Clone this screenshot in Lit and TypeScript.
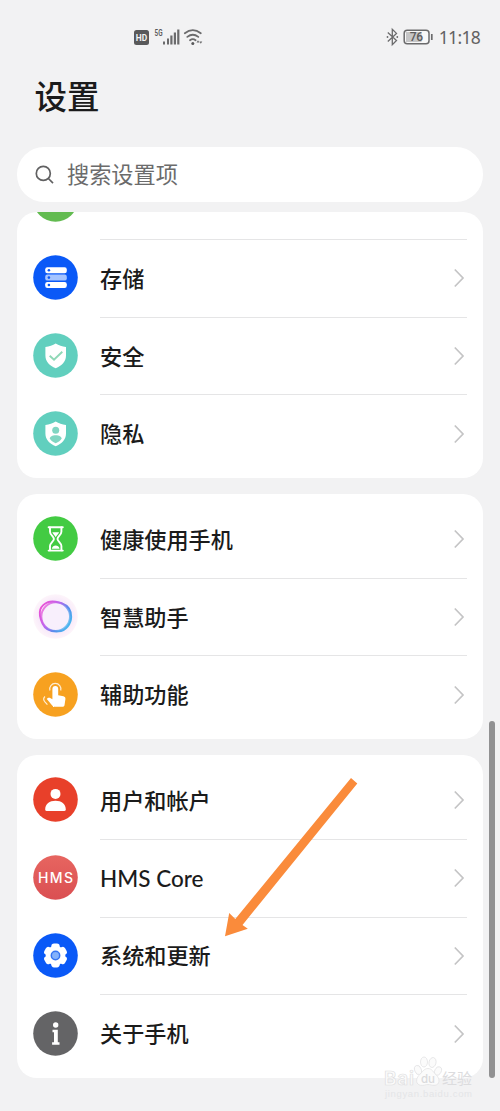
import { LitElement, html, svg, css, SVGTemplateResult } from "lit";
import { customElement, property } from "lit/decorators.js";

const GEAR_TEETH = [0, 60, 120, 180, 240, 300];

const icons: Record<string, SVGTemplateResult> = {
  storage: svg`
    <circle cx="22.5" cy="22.5" r="22.3" fill="#0a59f7"/>
    <rect x="12.2" y="12.2" width="21.6" height="6" rx="2.2" fill="#fff"/>
    <rect x="12.2" y="19.6" width="21.6" height="6" rx="2.2" fill="#a5c4ff"/>
    <rect x="12.2" y="27" width="21.6" height="6" rx="2.2" fill="#fff"/>
    <g fill="#0a59f7"><circle cx="15.9" cy="15.2" r="1.3"/><circle cx="15.9" cy="22.6" r="1.3"/><circle cx="15.9" cy="30" r="1.3"/></g>`,
  security: svg`
    <circle cx="22.5" cy="22.5" r="22.3" fill="#61cfbe"/>
    <path d="M22.7 10.4c3 2 6.400 3.100 10.300 3.600v8.500c0 6.100-4.200 10.200-10.300 12.700-6.100-2.500-10.300-6.600-10.300-12.700V14c3.900-.5 7.300-1.600 10.300-3.600z" fill="#fff"/>
    <path d="M16.700 22.800l4.300 4 8.300-8" fill="none" stroke="#8fd8b6" stroke-width="1.900"/>`,
  privacy: svg`
    <circle cx="22.5" cy="22.500" r="22.3" fill="#61cfbe"/>
    <path d="M22.700 10.400c3 2 6.400 3.100 10.300 3.600v8.500c0 6.100-4.200 10.200-10.300 12.700-6.100-2.500-10.300-6.600-10.300-12.700V14c3.900-.5 7.300-1.600 10.300-3.600z" fill="#fff"/>
    <circle cx="22.700" cy="19.300" r="3.500" fill="#80d6c2"/>
    <path d="M16.800 27.600c0-2 2.500-3.400 5.900-3.400s5.900 1.400 5.900 3.400c-1 1.900-3.200 3.600-5.900 4.600-2.700-1-4.900-2.700-5.900-4.600z" fill="#80d6c2"/>`,
  health: svg`
    <circle cx="22.500" cy="22.500" r="22.300" fill="#43cb43"/>
    <g fill="none" stroke="#fff" stroke-width="1.900" stroke-linecap="round" stroke-linejoin="round">
      <path d="M15.600 11.200h14.200M15.600 34.600h14.200"/>
      <path d="M17 11.500v4.200c0 3.300 3.900 4.900 3.900 7.200s-3.900 3.900-3.900 7.200v4.200M28.400 11.500v4.200c0 3.300-3.900 4.900-3.900 7.200s3.900 3.900 3.900 7.200v4.200"/>
    </g>
    <path d="M19.300 16.200h6.800c-.6 2-2.700 3-3.400 5-.7-2-2.800-3-3.400-5zM18.800 32.800c.5-2.400 2.200-3.200 3.900-3.200s3.400.8 3.900 3.200z" fill="#fff"/>`,
  assistant: svg`
    <defs>
      <radialGradient id="halo"><stop offset=".65" stop-color="#f6e6fa"/><stop offset="1" stop-color="#fcf0f8" stop-opacity=".7"/></radialGradient>
      <linearGradient id="ring" x1="0" y1=".15" x2="1" y2=".75"><stop offset="0" stop-color="#f04fd3"/><stop offset=".4" stop-color="#bd65ee"/><stop offset=".7" stop-color="#568dec"/><stop offset="1" stop-color="#48b9ee"/></linearGradient>
    </defs>
    <circle cx="22.500" cy="22.500" r="22.300" fill="url(#halo)"/>
    <path d="M15 8.200C20 6.200 23.500 7.800 28.500 9.200C35 11.500 38.300 16.500 38.200 23C38 30 33 37 25.500 37.400C18 37.900 12 35 9.500 29.500C7.200 24.500 5.800 20 7.300 15.500C8.700 12 11.500 9.600 15 8.200z" fill="#f8effc" stroke="url(#ring)" stroke-width="1.900"/>
    <circle cx="22.700" cy="22.600" r="14.300" fill="none" stroke="url(#ring)" stroke-width="1.900" opacity=".75"/>`,
  access: svg`
    <circle cx="22.500" cy="22.500" r="22.300" fill="#f7a120"/>
    <path d="M19.400 16.900a2.900 2.900 0 0 1 5.800 0v6.300l5.200 1.100c1.500.4 2.200 1.300 2 2.900l-.8 5.500c-.2 1.400-.9 2.100-2.300 2.100h-7.600c-1.100 0-1.800-.4-2.500-1.200l-5.400-6.500c.9-1.500 2.500-1.500 3.800-.8l1.800.9z" fill="#fff"/>
    <path d="M16.900 18.500a5.600 5.600 0 1 1 10.800 0" fill="none" stroke="#fff" stroke-opacity=".8" stroke-width="1.200"/>
    <path d="M12 24.500c-1.600 1.500-1.500 3.800-.1 5.400l2.500 2.700" fill="none" stroke="#fff" stroke-opacity=".8" stroke-width="1.200"/>`,
  account: svg`
    <circle cx="22.500" cy="22.500" r="22.300" fill="#e8402a"/>
    <circle cx="22.500" cy="16.900" r="5" fill="#fff"/>
    <path d="M12.200 32.500c0-5.800 4.400-8.800 10.300-8.800s10.300 3 10.300 8.800c0 1-.5 1.400-1.400 1.400H13.600c-.9 0-1.400-.4-1.400-1.400z" fill="#fff"/>`,
  hms: svg`
    <defs><linearGradient id="hmsbg" x1="0" y1="0" x2="0" y2="1"><stop offset="0" stop-color="#e76560"/><stop offset="1" stop-color="#da4f52"/></linearGradient></defs>
    <circle cx="22.500" cy="22.500" r="22.300" fill="url(#hmsbg)"/>
    <text x="5" y="27.700" textLength="35" font-family="Inter, sans-serif" font-weight="500" font-size="14" fill="#fff">HMS</text>`,
  system: svg`
    <circle cx="22.500" cy="22.500" r="22.300" fill="#0a59f7"/>
    <circle cx="22.500" cy="22.500" r="9.800" fill="#fff"/>
    ${GEAR_TEETH.map((a) => svg`<rect x="18.300" y="10.600" width="8.400" height="8" rx="2.800" fill="#fff" transform="rotate(${a} 22.500 22.500)"/>`)}
    <circle cx="22.500" cy="22.500" r="4.200" fill="#84b1fb" stroke="#3574f2" stroke-width="1.500"/>`,
  about: svg`
    <circle cx="22.500" cy="22.500" r="22.300" fill="#646466"/>
    <circle cx="22.700" cy="14" r="2.700" fill="#fff"/>
    <path d="M19.500 18.700h5.300v12.500h1.700v2.600h-7.400v-2.600h1.900v-9.900h-1.500z" fill="#fff"/>`,
};

@customElement("settings-row")
class SettingsRow extends LitElement {
  @property() icon = "";
  @property() label = "";

  static styles = css`
    :host { display: flex; align-items: center; height: 77.7px; padding-left: 16px; }
    .icon { width: 45px; height: 45px; flex: none; margin-right: 22px; }
    .body { flex: 1; align-self: stretch; display: flex; align-items: center; justify-content: space-between;
      border-top: 1px solid var(--line, transparent); margin-right: 16px; box-sizing: border-box; }
    .label { font-size: 22.15px; font-weight: 500; line-height: 32px; padding-bottom: 3px; color: #1b1b1b; white-space: nowrap; }
    .latin { font-family: Lato, sans-serif; font-size: 22.500px; padding: 2px 0 0; }
    .chevron { width: 12px; height: 20px; margin-right: 2px; }
  `;

  render() {
    const latin = /^[\x20-\x7e]+$/.test(this.label);
    return html`
      <svg class="icon" viewBox="0 0 45 45">${icons[this.icon]}</svg>
      <div class="body">
        <span class="label ${latin ? "latin" : ""}">${this.label}</span>
        <svg class="chevron" viewBox="0 0 12 20"><path d="M1.800 1.500L10 10l-8.200 8.500" fill="none" stroke="#c4c4c5" stroke-width="1.700"/></svg>
      </div>`;
  }
}

const GROUPS = [
  [["storage", "存储"], ["security", "安全"], ["privacy", "隐私"]],
  [["health", "健康使用手机"], ["assistant", "智慧助手"], ["access", "辅助功能"]],
  [["account", "用户和帐户"], ["hms", "HMS Core"], ["system", "系统和更新"], ["about", "关于手机"]],
];

@customElement("app-root")
class AppRoot extends LitElement {
  static styles = css`
    :host { display: block; position: relative; width: 500px; height: 1111px; overflow: hidden; background: #f2f2f3;
      font-family: "Noto Sans CJK SC", sans-serif; color: #1b1b1b; }
    .status { display: flex; justify-content: space-between; height: 72.500px; }
    .status svg { display: block; height: 72px; }
    .title { margin: 0; padding-left: 34.500px; height: 74.500px; line-height: 43px; font-size: 32.500px; font-weight: 500; }
    .search { display: flex; align-items: center; gap: 11px; height: 55px; margin: 0 17px; padding-left: 17px;
      box-sizing: border-box; border-radius: 27px; background: #fff; color: #6b6b6b; font-size: 22.200px; }
    .search svg { width: 22px; height: 22px; }
    .search span { padding-bottom: 4px; }
    .list { display: flex; flex-direction: column; gap: 16px; margin: 10px 17px 0; }
    .card { padding: 6px 0; border-radius: 20px; background: #fff; }
    .card.first { padding-top: 0; }
    .peek { height: 27px; padding-left: 16px; overflow: hidden; }
    .peek svg { display: block; width: 45px; height: 10px; }
    .lined { --line: #e5e5e6; }
    .overlay { position: absolute; inset: 0; pointer-events: none; }
    .scrollbar { position: absolute; left: 489px; top: 721px; width: 6px; height: 357px; border-radius: 3px; background: #919192; }
  `;

  render() {
    return html`
      <div class="status">
        <svg width="220" viewBox="0 0 220 72">
          <rect x="134" y="30" width="15" height="15" rx="2.500" fill="#59595a"/>
          <text x="135.800" y="41" textLength="11.400" lengthAdjust="spacingAndGlyphs" font-family="Roboto, sans-serif" font-weight="700" font-size="9" fill="#f4f4f4">HD</text>
          <text x="154.500" y="36" textLength="8" lengthAdjust="spacingAndGlyphs" font-family="Roboto, sans-serif" font-weight="600" font-size="8.500" fill="#59595a">5G</text>
          <g fill="#6b6b6c"><rect x="163" y="41.500" width="2" height="3"/><rect x="167" y="38.500" width="2" height="6"/><rect x="170.300" y="35.500" width="2.200" height="9"/><rect x="173.800" y="32.500" width="2.200" height="12"/><rect x="177.200" y="29.500" width="2.200" height="15"/></g>
          <g fill="none" stroke="#6b6b6c" stroke-width="1.800" stroke-linecap="round"><path d="M184.800 33.200q8-6.200 16 0M187.300 36.900q5.500-4.400 11 0M190 40.200q2.800-2.200 5.600 0"/></g>
          <circle cx="192.800" cy="43.400" r="1.500" fill="#59595a"/>
          <path d="M198 40.200l1.500 2.200h-3zM200.800 43.800l-1.400-2.200h2.900z" fill="#6b6b6c"/>
        </svg>
        <svg width="120" viewBox="380 0 120 72">
          <path d="M387.800 32.500l8.700 8-4.200 4.200V29.300l4.200 4.100-8.700 8" fill="none" stroke="#6b6b6c" stroke-width="1.300"/>
          <g fill="#6b6b6c"><circle cx="387.500" cy="37" r=".9"/><circle cx="397.300" cy="37" r=".9"/></g>
          <rect x="404.200" y="30.200" width="24.800" height="13.600" rx="3" fill="#f8f8f8" stroke="#6b6b6c" stroke-width="1.500"/>
          <rect x="406" y="32" width="15.500" height="10" fill="#c6c6c7"/>
          <path d="M431.800 34v6" stroke="#6b6b6c" stroke-width="1.700"/>
          <text x="409.700" y="41.300" textLength="13.500" font-family="Roboto, sans-serif" font-weight="500" font-size="12" fill="#5b5b5c">76</text>
          <text x="438.800" y="44" textLength="42" font-family="Noto Sans, sans-serif" font-size="17.500" fill="#626263">11:18</text>
        </svg>
      </div>
      <h1 class="title">设置</h1>
      <div class="search">
        <svg viewBox="0 0 22 22"><g fill="none" stroke="#616162" stroke-width="1.700"><circle cx="9.300" cy="9.400" r="7"/><path d="M14.400 14.500l4.600 4.600"/></g></svg>
        <span>搜索设置项</span>
      </div>
      <div class="list">
        ${GROUPS.map((group, g) => html`
          <div class="card ${g === 0 ? "first" : ""}">
            ${g === 0 ? html`<div class="peek"><svg viewBox="0 35 45 10"><circle cx="22.500" cy="22.500" r="22.300" fill="#62bb50"/></svg></div>` : ""}
            ${group.map(([icon, label], i) => html`<settings-row class=${g === 0 || i > 0 ? "lined" : ""} .icon=${icon} .label=${label}></settings-row>`)}
          </div>`)}
      </div>
      <div class="scrollbar"></div>
      <svg class="overlay" width="500" height="1111" viewBox="0 0 500 1111">
        <path d="M351 778l6.300 5.500L242.500 925l5.300 3.800-22.800 7.500 4.200-23.200 6.100 5.900z" fill="#fa8b3b"/>
        <g fill="#fbfbfb" stroke="#dfdfe1" stroke-width=".7">
          <text x="384" y="1085" textLength="30" font-family="Inter, sans-serif" font-weight="600" font-size="19">Bai</text>
          <ellipse cx="418" cy="1070" rx="3.300" ry="4.700" transform="rotate(-20 418 1070)"/>
          <ellipse cx="424" cy="1062" rx="3.500" ry="5"/>
          <ellipse cx="432.500" cy="1062.500" rx="3.500" ry="5" transform="rotate(12 432.500 1062.500)"/>
          <ellipse cx="438" cy="1071" rx="3.200" ry="4.500" transform="rotate(25 438 1071)"/>
          <path d="M428 1068.500c4 0 5.500 4 8.500 6.800 3.500 3.200 3.500 9.500-1.500 10-3 .3-4.500-.8-7-.8s-4 1.200-7.300.8c-5-.6-5.200-6.500-1.700-10 3.200-3.100 5-6.800 9-6.800z"/>
          <text x="421" y="1082.500" textLength="14" font-family="Inter, sans-serif" font-weight="500" font-size="11.500" fill="#dadadc" stroke="none">du</text>
          <text x="442" y="1084" textLength="30" font-family="Noto Sans CJK SC, sans-serif" font-weight="400" font-size="15" fill="#dcdcde" stroke="none">经验</text>
        </g>
        <text x="385" y="1097" textLength="87" font-family="Liberation Sans, sans-serif" font-size="9.500" fill="#e4e5e7">jingyan.baidu.com</text>
      </svg>`;
  }
}
